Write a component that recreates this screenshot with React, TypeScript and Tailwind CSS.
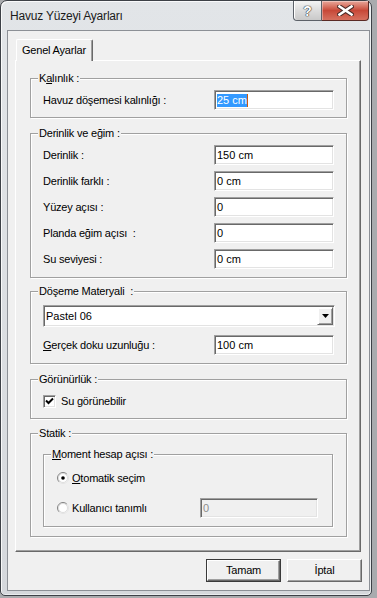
import React from "react";

const sunken =
  "border border-t-[#a0a0a0] border-l-[#a0a0a0] border-r-white border-b-white shadow-[inset_1px_1px_0_#696969,inset_-1px_-1px_0_#e3e3e3]";
const raised =
  "border border-t-white border-l-white border-r-[#696969] border-b-[#696969] shadow-[inset_-1px_-1px_0_#a0a0a0]";

interface TextBoxProps {
  value: string;
  selected?: boolean;
  disabled?: boolean;
  width?: string;
}

const TextBox: React.FC<TextBoxProps> = ({ value, selected, disabled, width = "w-[120px]" }) => (
  <div
    className={`flex h-5 items-center pl-[2px] tracking-normal ${sunken} ${width} ${
      disabled ? "bg-[#f0f0f0] text-[#8d8d8d]" : "bg-white"
    }`}
  >
    {selected ? (
      <>
        <span className="bg-[#3399ff] leading-[13px] text-white">{value}</span>
        <span className="h-[13px] w-px bg-[#c9580c]" />
      </>
    ) : (
      <span className="leading-[13px]">{value}</span>
    )}
  </div>
);

const Group: React.FC<{ title: React.ReactNode; className?: string; children?: React.ReactNode }> = ({
  title,
  className = "",
  children,
}) => (
  <div
    className={`relative shrink-0 border border-[#a0a0a0] shadow-[inset_1px_1px_0_#fff,1px_1px_0_#fff] ${className}`}
  >
    <span className="absolute left-[7px] top-[-7px] whitespace-pre bg-[#f0f0f0] px-px leading-[13px]">{title}</span>
    {children}
  </div>
);

const Row: React.FC<{ label: React.ReactNode; children?: React.ReactNode }> = ({ label, children }) => (
  <div className="flex h-5 items-center justify-between">
    <span className="whitespace-pre">{label}</span>
    {children}
  </div>
);

const Radio: React.FC<{ checked?: boolean }> = ({ checked }) => (
  <svg width="12" height="12" viewBox="0 0 12 12" className="shrink-0">
    <defs>
      <linearGradient id={checked ? "rg1" : "rg2"} x1="0" y1="0" x2="1" y2="1">
        <stop offset="0.45" stopColor="#808080" />
        <stop offset="0.55" stopColor="#e3e3e3" />
      </linearGradient>
    </defs>
    <circle cx="6" cy="6" r="5.5" fill="#fff" stroke={`url(#${checked ? "rg1" : "rg2"})`} />
    <circle cx="6" cy="6" r="4.5" fill="none" stroke="#c8c8c8" strokeWidth="0.6" />
    {checked && <circle cx="6" cy="6" r="1.8" fill="#000" />}
  </svg>
);

export default function App() {
  return (
    <div className="h-[598px] w-[377px] overflow-hidden bg-[#a9abae] font-['Liberation_Sans',Arial,sans-serif] text-[11px] tracking-[-0.2px] text-black">
      <div className="flex h-[596px] w-[372px] flex-col rounded-t-[7px] rounded-b-[5px] border border-[#3d4147] bg-gradient-to-b from-[#e2e5e8] to-[#d5d8dc] pb-[4px] pl-[6px] pr-px shadow-[inset_1px_1px_0_rgba(255,255,255,0.8),inset_-1px_-1px_0_rgba(255,255,255,0.5)]">
        {/* title bar */}
        <div className="flex h-[29px] shrink-0 items-start justify-between">
          <span className="pl-[3px] pt-[8px] text-[12px] leading-[15px] tracking-[-0.2px] text-[#1b1b1b]">
            Havuz Yüzeyi Ayarları
          </span>
          <div className="mr-px flex h-[20px]">
            <div className="flex w-[29px] items-center justify-center rounded-bl-[4px] border border-t-0 border-[#5c6168] bg-gradient-to-b from-[#f4f4f4] via-[#dcdcdc] to-[#c9c9c9] shadow-[inset_1px_0_0_#fff]">
              <span className="text-[14px] font-bold leading-[14px] text-white [text-shadow:0_0_1px_#333,0_0_1px_#333,0_0_1px_#333]">
                ?
              </span>
            </div>
            <div className="flex w-[47px] items-center justify-center rounded-br-[4px] border border-l-0 border-t-0 border-[#5a2a25] bg-gradient-to-b from-[#e7a79b] via-[#c74838] to-[#d6705f] shadow-[inset_1px_1px_0_rgba(255,255,255,0.35)]">
              <svg width="17" height="11" viewBox="0 0 17 11">
                <path d="M2.5 1.5 L14.5 9.5 M14.5 1.5 L2.5 9.5" stroke="#4a2a26" strokeWidth="4.6" strokeLinecap="square" />
                <path d="M2.5 1.5 L14.5 9.5 M14.5 1.5 L2.5 9.5" stroke="#fff" strokeWidth="2.6" strokeLinecap="square" />
              </svg>
            </div>
          </div>
        </div>

        {/* client area */}
        <div className="flex flex-1 flex-col border border-[#8c9096] bg-[#f0f0f0]">
          {/* tab strip */}
          <div className="ml-[7px] mt-[8px] flex h-[21px] shrink-0 items-end">
            <div className="relative z-10 -mb-px ml-px flex h-[22px] w-[77px] items-center rounded-t-[2px] border-l border-t border-r border-l-white border-t-white border-r-[#696969] bg-[#f0f0f0] pb-px pl-[5px] shadow-[inset_-1px_0_0_#a0a0a0]">
              Genel Ayarlar
            </div>
          </div>

          {/* tab panel */}
          <div className={`ml-[7px] flex h-[492px] w-[346px] shrink-0 flex-col pl-[14px] pt-[17px] ${raised}`}>
            <Group
              title={
                <>
                  K<span className="underline underline-offset-1">a</span>lınlık :
                </>
              }
              className="h-[40px] w-[317px] px-[12px] pt-[11px]"
            >
              <Row label="Havuz döşemesi kalınlığı :">
                <TextBox value="25 cm" selected />
              </Row>
            </Group>

            <Group title="Derinlik ve eğim :" className="mt-[15px] flex h-[145px] w-[317px] flex-col gap-[6px] px-[12px] pt-[11px]">
              <Row label="Derinlik :">
                <TextBox value="150 cm" />
              </Row>
              <Row label="Derinlik farklı :">
                <TextBox value="0 cm" />
              </Row>
              <Row label="Yüzey açısı :">
                <TextBox value="0" />
              </Row>
              <Row label="Planda eğim açısı  :">
                <TextBox value="0" />
              </Row>
              <Row label="Su seviyesi :">
                <TextBox value="0 cm" />
              </Row>
            </Group>

            <Group title="Döşeme Materyali  :" className="mt-[13px] h-[73px] w-[317px] pl-[12px] pr-[11px] pt-[13px]">
              <div className={`flex h-[22px] items-center justify-between bg-white pl-[2px] tracking-normal ${sunken}`}>
                <span>Pastel 06</span>
                <div className={`m-px flex h-[18px] w-[16px] items-center justify-center bg-[#f0f0f0] ${raised} shadow-[inset_1px_1px_0_#fff,inset_-1px_-1px_0_#a0a0a0]`}>
                  <svg width="7" height="4" viewBox="0 0 7 4">
                    <path d="M0 0 H7 L3.5 4 Z" fill="#000" />
                  </svg>
                </div>
              </div>
              <div className="mt-[8px] pr-px">
                <Row
                  label={
                    <>
                      <span className="underline underline-offset-1">G</span>erçek doku uzunluğu :
                    </>
                  }
                >
                  <TextBox value="100 cm" />
                </Row>
              </div>
            </Group>

            <Group title="Görünürlük :" className="mt-[15px] h-[40px] w-[317px] px-[12px] pt-[15px]">
              <div className="flex h-[13px] items-center gap-[5px]">
                <div className={`flex h-[13px] w-[13px] items-center justify-center bg-white ${sunken}`}>
                  <svg width="9" height="9" viewBox="0 0 9 9">
                    <path d="M1 3.5 L3.5 6 L8 1.5" stroke="#000" strokeWidth="2" fill="none" />
                  </svg>
                </div>
                <span>Su görünebilir</span>
              </div>
            </Group>

            <Group title="Statik :" className="mt-[14px] h-[104px] w-[317px] pl-[12px] pt-[20px]">
              <Group
                title={
                  <>
                    <span className="underline underline-offset-1">M</span>oment hesap açısı :
                  </>
                }
                className="flex h-[73px] w-[290px] flex-col gap-[10px] pl-[13px] pr-[14px] pt-[13px]"
              >
                <div className="flex h-5 items-center gap-[3px]">
                  <Radio checked />
                  <span>
                    <span className="underline underline-offset-1">O</span>tomatik seçim
                  </span>
                </div>
                <div className="flex h-5 items-center justify-between">
                  <div className="flex items-center gap-[3px]">
                    <Radio />
                    <span>Kullanıcı tanımlı</span>
                  </div>
                  <TextBox value="0" disabled width="w-[118px]" />
                </div>
              </Group>
            </Group>
          </div>

          {/* buttons */}
          <div className="mt-[7px] flex shrink-0 justify-end gap-[6px] pr-[7px]">
            <div className="h-[23px] w-[75px] border border-[#3a3a3a]">
              <div className={`flex h-full w-full items-center justify-center bg-[#f0f0f0] ${raised}`}>Tamam</div>
            </div>
            <div className={`flex h-[23px] w-[75px] items-center justify-center bg-[#f0f0f0] ${raised}`}>İptal</div>
          </div>
        </div>
      </div>
    </div>
  );
}
